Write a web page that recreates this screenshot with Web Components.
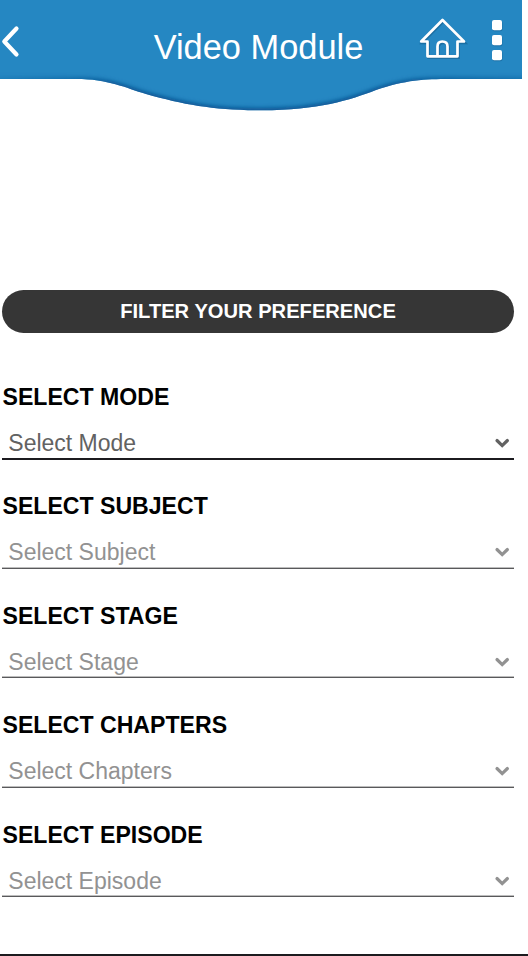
<!DOCTYPE html>
<html lang="en">
<head>
<meta charset="utf-8">
<title>Video Module</title>
<style>
    body {
        margin: 0;
        background: #fff;
        font-family: "Liberation Sans", Arial, Helvetica, sans-serif;
    }
</style>
</head>
<body>
<video-page>
    <module-header slot="header">Video Module</module-header>
    <filter-button slot="action">FILTER YOUR PREFERENCE</filter-button>
    <select-field label="SELECT MODE" active>Select Mode</select-field>
    <select-field label="SELECT SUBJECT">Select Subject</select-field>
    <select-field label="SELECT STAGE">Select Stage</select-field>
    <select-field label="SELECT CHAPTERS">Select Chapters</select-field>
    <select-field label="SELECT EPISODE">Select Episode</select-field>
</video-page>

<script>
class VideoPage extends HTMLElement {
    constructor() {
        super();
        this.attachShadow({ mode: "open" });
        this.shadowRoot.innerHTML = `
        <style>
            :host {
                display: flex;
                flex-direction: column;
                box-sizing: border-box;
                height: 956px;
                border-bottom: 2px solid #1c1b1f;
                overflow: hidden;
            }

            .action {
                padding: 178px 14px 0 2px;
            }

            .fields {
                display: flex;
                flex-direction: column;
                padding: 49px 14px 0 2px;
            }
        </style>
        <slot name="header"></slot>
        <div class="action"><slot name="action"></slot></div>
        <div class="fields"><slot></slot></div>
        `;
    }
}

class ModuleHeader extends HTMLElement {
    constructor() {
        super();
        this.attachShadow({ mode: "open" });
        this.shadowRoot.innerHTML = `
        <style>
            :host {
                display: block;
                position: relative;
                width: 522px;
                height: 112px;
                color: #fff;
            }

            .wave {
                position: absolute;
                inset: 0;
            }

            .bar {
                position: relative;
                display: grid;
                grid-template-columns: 110px 1fr 110px;
                align-items: center;
                height: 80px;
            }

            h1 {
                margin: 14px 0 0 -5px;
                font-size: 34.4px;
                font-weight: 400;
                line-height: 40px;
                text-align: center;
                white-space: nowrap;
            }

            svg {
                display: block;
            }
        </style>
        <svg class="wave" width="522" height="112" viewBox="0 0 522 112">
            <defs>
                <filter id="soft" x="-5%" y="-30%" width="110%" height="160%">
                    <feGaussianBlur stdDeviation="2"/>
                </filter>
                <linearGradient id="shade" gradientUnits="userSpaceOnUse" x1="0" y1="0" x2="522" y2="0">
                    <stop offset="0" stop-color="#085392" stop-opacity=".2"/>
                    <stop offset=".14" stop-color="#085392" stop-opacity=".5"/>
                    <stop offset=".22" stop-color="#085392"/>
                    <stop offset=".75" stop-color="#085392"/>
                    <stop offset=".88" stop-color="#085392" stop-opacity=".6"/>
                    <stop offset="1" stop-color="#085392" stop-opacity=".4"/>
                </linearGradient>
                <clipPath id="shape">
                    <path d="M0 0H522V79H450C425 79 405 80 376 90C350 100 318 110.300 262 110.300C215 110.300 185 105 146 94C126 88 108 79 76 79H0Z"/>
                </clipPath>
            </defs>
            <g clip-path="url(#shape)">
                <rect width="522" height="112" fill="#2587c2"/>
                <path d="M532 80H450C425 80 405 81 376 91C350 101 318 111 262 111C215 111 185 106 146 95C126 89 108 80 76 80H-10" fill="none" stroke="url(#shade)" stroke-width="6" filter="url(#soft)"/>
            </g>
        </svg>
        <div class="bar">
            <svg width="110" height="80" viewBox="0 0 110 80">
                <path d="M16.500 28.500L4.300 41.500L16.500 54.500" fill="none" stroke="#fff" stroke-width="4.200" stroke-linecap="round" stroke-linejoin="round"/>
            </svg>
            <h1><slot></slot></h1>
            <svg width="110" height="80" viewBox="412 0 110 80">
                <g fill="none" stroke="#145b8b" stroke-opacity=".55" stroke-width="2.600" transform="translate(1 1.400)">
                    <path d="M427.500 41.500H421.200L442.500 20L464 41.500H457.500V56.300H427.500Z"/>
                    <path d="M437.500 55V46.500Q437.500 41.500 442.300 41.500Q447.500 41.500 447.500 46.500V55"/>
                </g>
                <g fill="none" stroke="#fff" stroke-width="2.700" stroke-linejoin="round">
                    <path d="M427.500 41.500H421.200L442.500 20L464 41.500H457.500V56.300H427.500Z"/>
                    <path d="M437.500 55.500V46.500Q437.500 41.500 442.300 41.500Q447.500 41.500 447.500 46.500V55.500"/>
                </g>
                <g fill="#145b8b" fill-opacity=".5">
                    <rect x="492.500" y="21" width="10" height="10.200" rx="2"/>
                    <rect x="492.500" y="36" width="10" height="10.200" rx="2"/>
                    <rect x="492.500" y="51" width="10" height="10.200" rx="2"/>
                </g>
                <g fill="#fff">
                    <rect x="492" y="20" width="10" height="10.200" rx="2"/>
                    <rect x="492" y="35" width="10" height="10.200" rx="2"/>
                    <rect x="492" y="50" width="10" height="10.200" rx="2"/>
                </g>
            </svg>
        </div>
        `;
    }
}

class FilterButton extends HTMLElement {
    constructor() {
        super();
        this.attachShadow({ mode: "open" });
        this.shadowRoot.innerHTML = `
        <style>
            :host {
                display: block;
            }

            button {
                display: block;
                width: 100%;
                height: 43px;
                padding: 0;
                border: 0;
                border-radius: 22px;
                background: #363636;
                color: #fff;
                font: bold 20.15px/43px "Liberation Sans", Arial, sans-serif;
            }
        </style>
        <button type="button"><slot></slot></button>
        `;
    }
}

class SelectField extends HTMLElement {
    constructor() {
        super();
        this.attachShadow({ mode: "open" });
        this.shadowRoot.innerHTML = `
        <style>
            :host {
                --ink: #929292;
                --line: #59595b;
                --edge: #bdbdbd;
                display: block;
                height: 109.4px;
            }

            :host([active]) {
                --ink: #626262;
                --line: #1c1b1f;
                --edge: #1c1b1f;
            }

            .label {
                height: 30px;
                padding-left: 0.5px;
                color: #000;
                font-size: 23.1px;
                font-weight: bold;
                line-height: 30px;
            }

            .control {
                display: flex;
                align-items: center;
                justify-content: space-between;
                box-sizing: border-box;
                height: 47.5px;
                padding: 15.5px 4px 0 6.3px;
                border-bottom: 1px solid var(--line);
                box-shadow: inset 0 -1px var(--edge);
                color: var(--ink);
                font-size: 23px;
                line-height: 30px;
            }

            svg {
                display: block;
            }
        </style>
        <div class="label"></div>
        <div class="control">
            <slot></slot>
            <svg width="16" height="12" viewBox="0 0 16 12">
                <path d="M3 3.500L8.200 8.600L13.400 3.500" fill="none" stroke="var(--ink)" stroke-width="3.200" stroke-linecap="round"/>
            </svg>
        </div>
        `;
    }

    connectedCallback() {
        this.shadowRoot.querySelector(".label").textContent = this.getAttribute("label");
    }
}

customElements.define("video-page", VideoPage);
customElements.define("module-header", ModuleHeader);
customElements.define("filter-button", FilterButton);
customElements.define("select-field", SelectField);
</script>
</body>
</html>
